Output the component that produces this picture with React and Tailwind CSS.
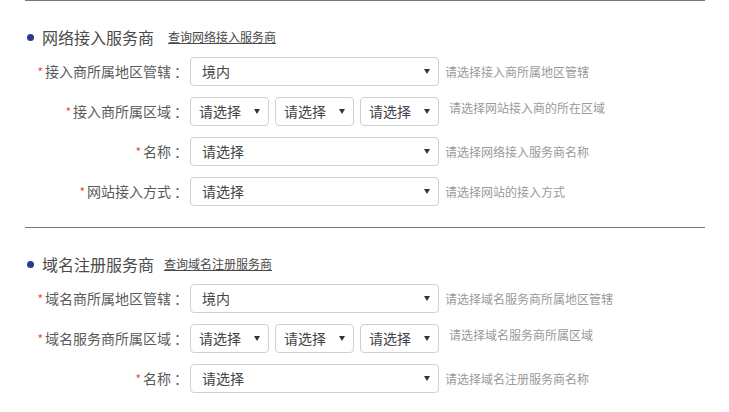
const font = { fontFamily: '"Noto Sans CJK SC", "Microsoft YaHei", sans-serif' };

const Arrow = () => (
  <svg width="6" height="5" viewBox="0 0 6 5" className="shrink-0">
    <path d="M0 0 L6 0 L3 5 Z" fill="#333" />
  </svg>
);

const Select = ({ value, small }) => (
  <div
    className={`flex h-[29px] items-center justify-between rounded-[4px] border border-[#d0d0d0] bg-white text-[14px] text-[#444] ${
      small ? 'w-[79px] pl-[8px] pr-[8px]' : 'w-[249px] pl-[11px] pr-[8px]'
    }`}
  >
    <span>{value}</span>
    <Arrow />
  </div>
);

const Row = ({ label, hint, triple, value = '请选择' }) => (
  <div className="flex h-[29px] items-center">
    <div className="flex w-[162px] items-center justify-end text-[14px] text-[#5a5a5a]">
      <span className="mr-[2px] text-[12px] text-[#f04a4a]">*</span>
      <span>{label}</span>
      <span className="ml-[3px] -mr-[1px]">：</span>
    </div>
    <div className="ml-[3px] flex gap-[6px]">
      {triple ? (
        <>
          <Select value="请选择" small />
          <Select value="请选择" small />
          <Select value="请选择" small />
        </>
      ) : (
        <Select value={value} />
      )}
    </div>
    <span
      className={`text-[12px] text-[#9a9a9a] ${triple ? 'ml-[10px] -mt-[7px]' : 'ml-[6px]'}`}
    >
      {hint}
    </span>
  </div>
);

const Section = ({ title, link, linkGap, rows }) => (
  <div className="w-[680px] border-t border-[#777] pt-[24px] pb-[21px]">
    <div className="flex h-[24px] items-center">
      <span className="ml-[2px] h-[7px] w-[7px] rounded-full bg-[#2b3a8c]" />
      <span className="ml-[8px] text-[16px] text-[#4a4a4a]">{title}</span>
      <a className={`text-[12px] text-[#4a4a4a] underline ${linkGap}`}>{link}</a>
    </div>
    <div className="mt-[8px] flex flex-col gap-[11px]">
      {rows.map((r) => (
        <Row key={r.label} {...r} />
      ))}
    </div>
  </div>
);

export default function App() {
  return (
    <div className="h-[412px] w-[729px] overflow-hidden bg-white pl-[25px]" style={font}>
      <Section
        title="网络接入服务商"
        link="查询网络接入服务商"
        linkGap="ml-[14px]"
        rows={[
          { label: '接入商所属地区管辖', hint: '请选择接入商所属地区管辖', value: '境内' },
          { label: '接入商所属区域', hint: '请选择网站接入商的所在区域', triple: true },
          { label: '名称', hint: '请选择网络接入服务商名称' },
          { label: '网站接入方式', hint: '请选择网站的接入方式' },
        ]}
      />
      <Section
        title="域名注册服务商"
        link="查询域名注册服务商"
        linkGap="ml-[10px]"
        rows={[
          { label: '域名商所属地区管辖', hint: '请选择域名服务商所属地区管辖', value: '境内' },
          { label: '域名服务商所属区域', hint: '请选择域名服务商所属区域', triple: true },
          { label: '名称', hint: '请选择域名注册服务商名称' },
        ]}
      />
    </div>
  );
}
